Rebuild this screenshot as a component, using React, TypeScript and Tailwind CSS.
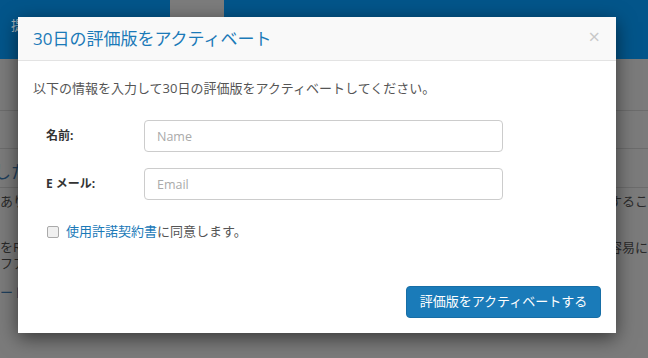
import { useState } from "react"

const font = { fontFamily: '"Open Sans", "Noto Sans CJK JP", sans-serif' }

const Backdrop = () => (
  <div className="w-[648px] h-[358px] bg-[#7b7b7b] overflow-hidden">
    <div className="h-[59px] bg-[#03558a] flex items-start">
      <div className="pl-[11px] pt-[16px] text-[13px] text-[#a9b4bc] w-[170px]">提供するサービス</div>
      <div className="w-[54px] h-full bg-[#7c7c7c]" />
    </div>
    <div className="h-[52px] border-b border-[#6c6c6c]" />
    <div className="h-[38px] border-b border-[#6c6c6c]" />
    <div className="h-[39px] border-b border-[#6c6c6c] flex items-end pb-[3px]">
      <span className="text-[17px] text-[#1f3f5c] -ml-[6px]">したら</span>
    </div>
    <div className="flex justify-between pt-[4px] text-[13px] text-[#2a2a2a]">
      <span>ありがとうございます。</span>
      <span>するこ</span>
    </div>
    <div className="flex justify-between pt-[27px] text-[13px] text-[#2a2a2a] leading-[16px]">
      <div>
        <div>をRDP</div>
        <div>フアイル</div>
      </div>
      <span>容易に</span>
    </div>
    <div className="pt-[12px] text-[13px] text-[#1f3f5c]">ートリアル</div>
  </div>
)

export default function App() {
  const [agree, setAgree] = useState(false)
  return (
    <div className="relative w-[648px] h-[358px]" style={font}>
      <Backdrop />
      <div className="absolute left-[18px] top-[17px] w-[598px] h-[316px] bg-white flex flex-col shadow-[0_5px_18px_rgba(0,0,0,0.55)]">
        <div className="h-[44px] bg-[#f9f9f9] border-b border-[#e3e3e3] flex items-center justify-between pl-[15px] pr-[16px]">
          <span className="text-[17px] text-[#1b7ab8]">30日の評価版をアクティベート</span>
          <span className="text-[20px] text-[#c8c8c8] leading-none pb-[3px]">×</span>
        </div>
        <div className="flex-1 flex flex-col pl-[15px] pr-[15px]">
          <p className="pt-[18px] text-[13px] text-[#555555] leading-[18px]">
            以下の情報を入力して30日の評価版をアクティベートしてください。
          </p>
          <div className="pt-[23px] flex flex-col gap-[16px]">
            <div className="flex items-center">
              <label className="w-[111px] pl-[13px] text-[12px] font-bold text-[#333333]">名前:</label>
              <input
                placeholder="Name"
                className="w-[359px] h-[32px] border border-[#cccccc] rounded-[4px] px-[12px] text-[12.5px] text-[#555] placeholder:text-[#aaaaaa] outline-none"
              />
            </div>
            <div className="flex items-center">
              <label className="w-[111px] pl-[13px] text-[12px] font-bold text-[#333333]">E メール:</label>
              <input
                placeholder="Email"
                className="w-[359px] h-[32px] border border-[#cccccc] rounded-[4px] px-[12px] text-[12.5px] text-[#555] placeholder:text-[#aaaaaa] outline-none"
              />
            </div>
          </div>
          <label className="pt-[22px] pl-[14px] flex items-center gap-[7px] text-[13px] text-[#555555]">
            <input
              type="checkbox"
              checked={agree}
              onChange={() => setAgree(!agree)}
              className="appearance-none w-[12px] h-[12px] border border-[#aaaaaa] rounded-[2px] bg-[#f0f0f0]"
            />
            <span>
              <a className="text-[#1b7ab8]">使用許諾契約書</a>に同意します。
            </span>
          </label>
          <div className="mt-auto pb-[15px] flex justify-end">
            <button className="w-[195px] h-[32px] rounded-[4px] bg-[#1a7bb9] border border-[#176ea6] text-white text-[13px]">
              評価版をアクティベートする
            </button>
          </div>
        </div>
      </div>
    </div>
  )
}
